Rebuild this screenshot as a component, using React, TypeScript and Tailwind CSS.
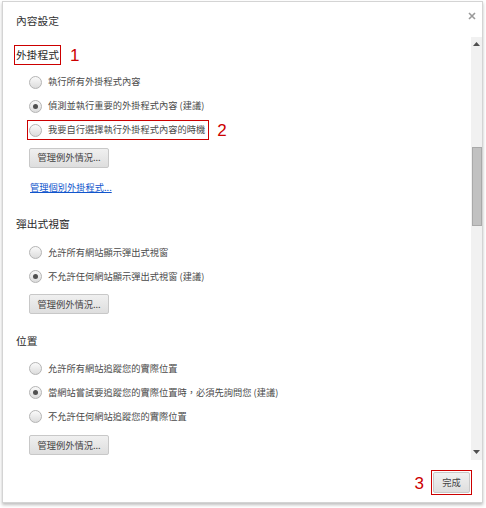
import React from "react";

const font = { fontFamily: '"Noto Sans CJK TC", "Noto Sans", sans-serif' };

function Radio({ checked }: { checked?: boolean }) {
  return (
    <span className="flex h-[13px] w-[13px] shrink-0 items-center justify-center rounded-full border border-[#b4b4b4] bg-gradient-to-b from-[#fafafa] to-[#dcdcdc]">
      {checked && <span className="h-[5px] w-[5px] rounded-full bg-[#505050]" />}
    </span>
  );
}

function Option({ label, checked, marked }: { label: string; checked?: boolean; marked?: string }) {
  return (
    <div className="flex h-[24px] items-center">
      <div
        className={
          "flex h-[20px] items-center gap-[6px] border px-[1px] pr-[3px] " +
          (marked ? "border-[#c00]" : "border-transparent")
        }
      >
        <Radio checked={checked} />
        <span className="text-[9.25px] leading-none text-[#4a4a4a]">{label}</span>
      </div>
      {marked && <span className="ml-[8px] font-['Liberation_Sans'] text-[17px] leading-none text-[#c00]">{marked}</span>}
    </div>
  );
}

function ManageButton() {
  return (
    <button className="ml-[15px] flex h-[20px] w-[80px] items-center justify-center rounded-[2px] border border-[#c8c8c8] bg-gradient-to-b from-[#f0f0f0] to-[#dedede] text-[9.25px] leading-none text-[#444]">
      管理例外情況...
    </button>
  );
}

function Heading({ text, marked }: { text: string; marked?: string }) {
  return (
    <div className="flex h-[20px] items-center">
      <span
        className={
          "flex h-[20px] items-center border px-[1px] text-[10.75px] leading-none text-[#2a2a2a] " +
          (marked ? "border-[#c00]" : "border-transparent")
        }
      >
        {text}
      </span>
      {marked && <span className="ml-[9px] font-['Liberation_Sans'] text-[17px] leading-none text-[#c00]">{marked}</span>}
    </div>
  );
}

export default function App() {
  return (
    <div className="h-[508px] w-[486px] bg-white pl-[2px] pt-[1px]" style={font}>
      <div className="flex h-[502px] w-[481px] flex-col border border-[#d4d4d4] bg-white shadow-[0_2px_3px_rgba(0,0,0,0.25)]">
        <div className="flex h-[35px] shrink-0 items-start justify-between">
          <span className="ml-[13px] mt-[14px] text-[10.75px] leading-none text-[#333]">內容設定</span>
          <svg className="mr-[6px] mt-[10px]" width="8" height="8" viewBox="0 0 8 8">
            <path d="M1 1 L7 7 M7 1 L1 7" stroke="#9a9a9a" strokeWidth="1.6" />
          </svg>
        </div>

        <div className="flex h-[423px] shrink-0">
          <div className="flex-1 overflow-hidden pl-[11px] pt-[8px]">
            <Heading text="外掛程式" marked="1" />
            <div className="mt-[5px] pl-[13px]">
              <Option label="執行所有外掛程式內容" />
              <Option label="偵測並執行重要的外掛程式內容 (建議)" checked />
              <Option label="我要自行選擇執行外掛程式內容的時機" marked="2" />
            </div>
            <div className="mt-[6px]">
              <ManageButton />
            </div>
            <a className="ml-[16px] mt-[15px] block text-[9.25px] leading-none text-[#1155cc] underline">
              管理個別外掛程式...
            </a>
            <div className="mt-[22px]">
              <Heading text="彈出式視窗" />
            </div>
            <div className="mt-[6px] pl-[13px]">
              <Option label="允許所有網站顯示彈出式視窗" />
              <Option label="不允許任何網站顯示彈出式視窗 (建議)" checked />
            </div>
            <div className="mt-[6px]">
              <ManageButton />
            </div>
            <div className="mt-[17px]">
              <Heading text="位置" />
            </div>
            <div className="mt-[5px] pl-[13px]">
              <Option label="允許所有網站追蹤您的實際位置" />
              <Option label="當網站嘗試要追蹤您的實際位置時，必須先詢問您 (建議)" checked />
              <Option label="不允許任何網站追蹤您的實際位置" />
            </div>
            <div className="mt-[7px]">
              <ManageButton />
            </div>
          </div>

          <div className="flex w-[11px] shrink-0 flex-col items-center bg-[#f1f1f1]">
            <svg className="mt-[5px]" width="7" height="4" viewBox="0 0 7 4">
              <path d="M0 4 L3.5 0 L7 4 Z" fill="#505050" />
            </svg>
            <div className="mt-[101px] h-[79px] w-[10px] border border-[#a9a9a9] bg-[#c1c1c1]" />
            <div className="flex-1" />
            <svg className="mb-[6px]" width="7" height="4" viewBox="0 0 7 4">
              <path d="M0 0 L3.5 4 L7 0 Z" fill="#505050" />
            </svg>
          </div>
        </div>

        <div className="flex flex-1 items-start justify-end pr-[10px] pt-[10px]">
          <span className="mr-[7px] mt-[5px] font-['Liberation_Sans'] text-[17px] leading-none text-[#c00]">3</span>
          <div className="border border-[#c00] p-[1px]">
            <button className="flex h-[21px] w-[37px] items-center justify-center rounded-[2px] border border-[#c8c8c8] bg-gradient-to-b from-[#f0f0f0] to-[#dedede] text-[9.25px] leading-none text-[#444]">
              完成
            </button>
          </div>
        </div>
      </div>
    </div>
  );
}
